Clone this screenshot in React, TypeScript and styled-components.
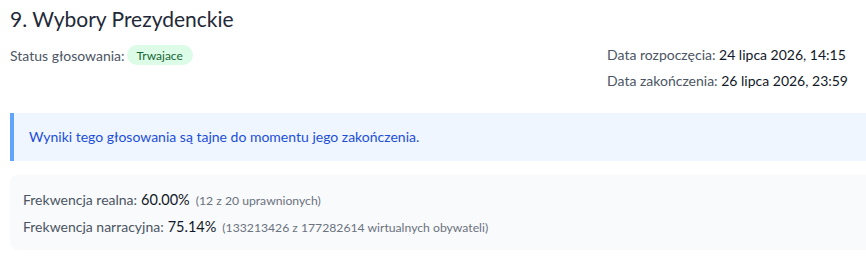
import React from "react";
import styled, { createGlobalStyle } from "styled-components";

const GlobalStyle = createGlobalStyle`
  html, body { margin: 0; padding: 0; background: #ffffff; }
  body { font-family: Lato, "Noto Sans", sans-serif; }
`;

const Page = styled.div`
  padding: 6px 0 0 10px;
  width: 880px;
  box-sizing: border-box;
`;

const Title = styled.h2`
  margin: 0;
  font-size: 21px;
  line-height: 1.2;
  font-weight: 400;
  color: #1f2937;
`;

const InfoRow = styled.div`
  display: flex;
  justify-content: space-between;
  align-items: flex-start;
  margin-top: 11px;
  padding-right: 32px;
`;

const StatusLine = styled.div`
  display: flex;
  align-items: center;
  gap: 2px;
  height: 26px;
  font-size: 14px;
  color: #4b5563;
`;

const Badge = styled.span`
  display: inline-flex;
  align-items: center;
  height: 20px;
  padding: 0 10px;
  border-radius: 10px;
  background: #dcfce7;
  color: #166534;
  font-size: 12px;
`;

const Dates = styled.div`
  display: flex;
  flex-direction: column;
  font-size: 14px;
  line-height: 26px;
  color: #4b5563;
`;

const Value = styled.span`
  color: #111827;
`;

const Alert = styled.div`
  margin-top: 19px;
  padding: 15px 16px 15px 15px;
  border-left: 4px solid #60a5fa;
  background: #eff6ff;
  color: #1d4ed8;
  font-size: 14px;
  line-height: 18px;
`;

const Stats = styled.div`
  margin-top: 14px;
  padding: 11px 13px 10px;
  border-radius: 8px;
  background: #f9fafb;
  display: flex;
  flex-direction: column;
`;

const StatLine = styled.div`
  height: 27px;
  display: flex;
  align-items: baseline;
  font-size: 14px;
  line-height: 27px;
  color: #4b5563;
  white-space: nowrap;
`;

const StatValue = styled.span`
  margin-left: 4px;
  font-size: 14.5px;
  color: #111827;
`;

const Note = styled.span`
  margin-left: 6px;
  font-size: 12.2px;
  color: #6b7280;
`;

export default function App() {
  return (
    <>
      <GlobalStyle />
      <Page>
        <Title>9. Wybory Prezydenckie</Title>
        <InfoRow>
          <StatusLine>
            Status głosowania: <Badge>Trwajace</Badge>
          </StatusLine>
          <Dates>
            <span>
              Data rozpoczęcia: <Value>24 lipca 2026, 14:15</Value>
            </span>
            <span>
              Data zakończenia: <Value>26 lipca 2026, 23:59</Value>
            </span>
          </Dates>
        </InfoRow>
        <Alert>Wyniki tego głosowania są tajne do momentu jego zakończenia.</Alert>
        <Stats>
          <StatLine>
            Frekwencja realna:<StatValue>60.00%</StatValue>
            <Note>(12 z 20 uprawnionych)</Note>
          </StatLine>
          <StatLine>
            Frekwencja narracyjna:<StatValue>75.14%</StatValue>
            <Note>(133213426 z 177282614 wirtualnych obywateli)</Note>
          </StatLine>
        </Stats>
      </Page>
    </>
  );
}
